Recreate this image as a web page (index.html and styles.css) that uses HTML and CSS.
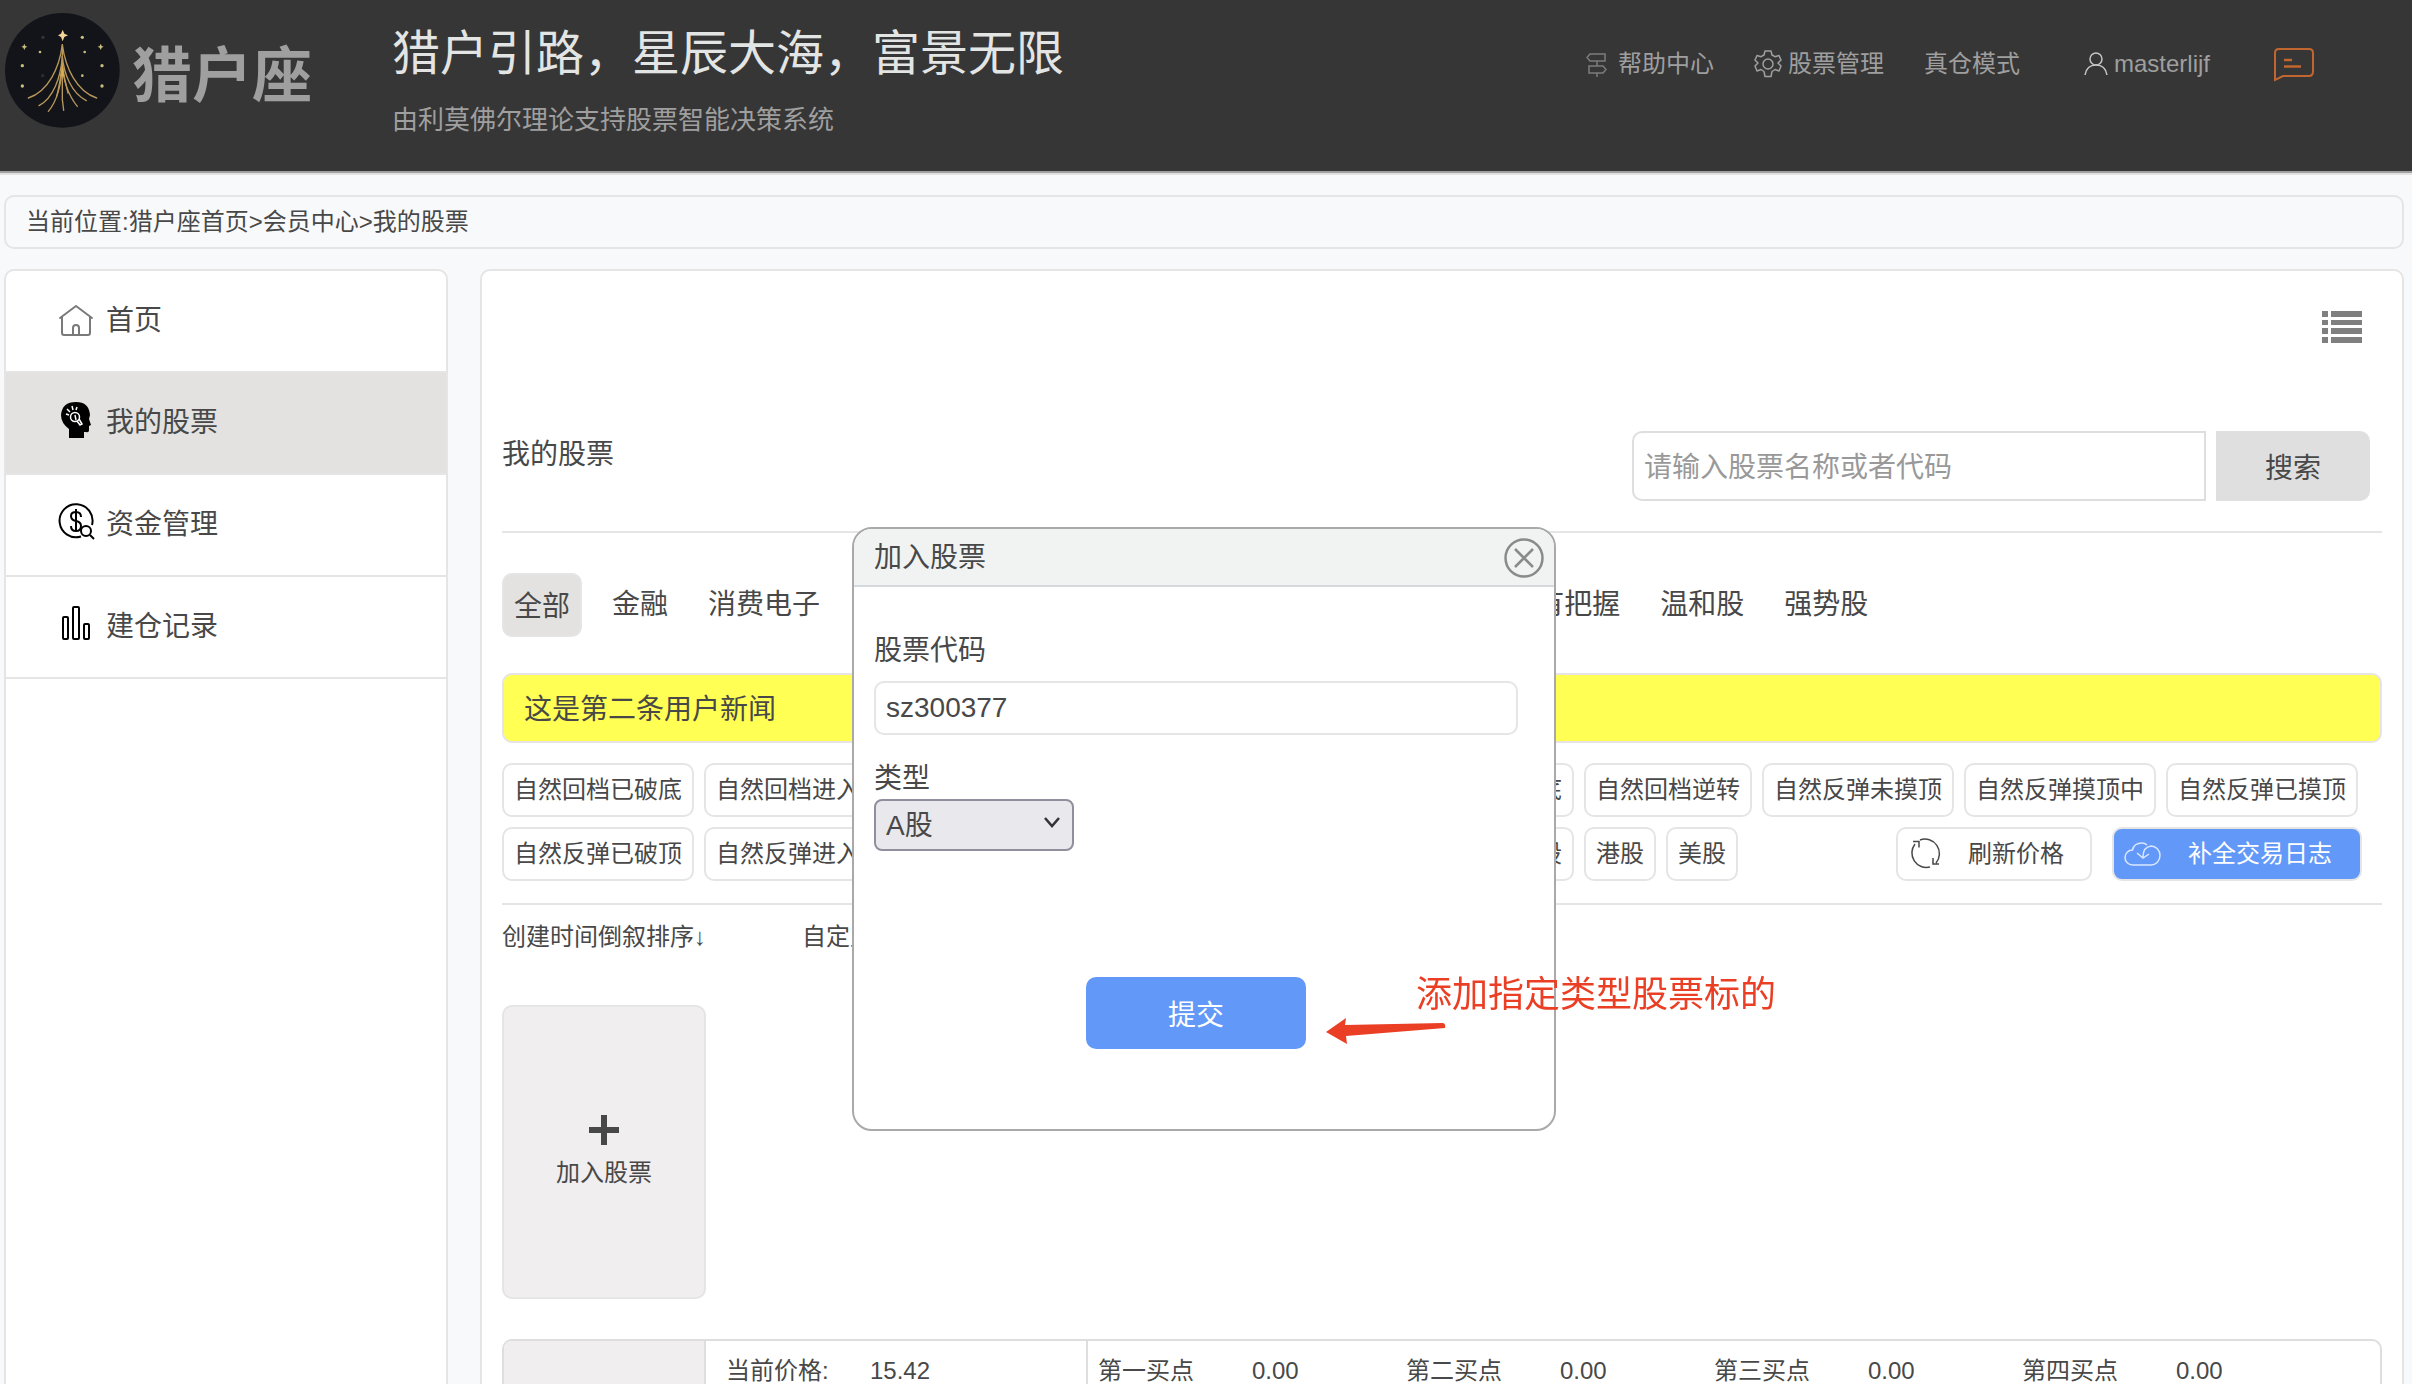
FILE: index.html
```
<!DOCTYPE html>
<html lang="zh-CN">
<head>
  <meta charset="utf-8">
  <title>猎户座 - 我的股票</title>
  <link rel="stylesheet" href="styles.css">
</head>
<body>
  <header class="header">
    <a class="brand" href="#">
      <svg class="brand-logo" viewBox="15 40 345 345">
        <circle cx="187" cy="212" r="172" fill="#131419"/>
        <g fill="none" stroke="#b8975a" stroke-width="4" stroke-linecap="round">
          <path d="M187 135C178 205 145 275 85 295"/>
          <path d="M187 135C196 205 230 275 290 295"/>
          <path d="M187 170C182 235 160 295 117 318"/>
          <path d="M187 195C184 260 170 305 145 335"/>
          <path d="M187 195C190 245 208 290 232 320"/>
          <path d="M187 170C192 225 215 280 259 303"/>
          <path d="M187 195C182 235 178 260 170 290"/>
          <path d="M187 195C192 235 196 250 204 280"/>
          <path d="M187 140V300L191 332"/>
        </g>
        <path d="M187 190l6 40h-12z" fill="#dba94f"/>
        <path d="M188 90l5 12 11 5-11 5-5 13-5-13-9-5 9-5z" fill="#f3d596"/>
        <g fill="#c9bd7c">
          <path d="M73 132l3 7 6 2-6 3-3 7-3-7-6-3 6-2z"/>
          <path d="M302 132l3 7 6 2-6 3-3 7-3-7-6-3 6-2z"/>
          <circle cx="247" cy="113" r="5"/>
          <circle cx="120" cy="157" r="4"/>
          <circle cx="254" cy="157" r="4"/>
          <circle cx="67" cy="198" r="5"/>
          <circle cx="306" cy="198" r="5"/>
          <circle cx="247" cy="228" r="4"/>
          <circle cx="67" cy="259" r="5"/>
          <circle cx="306" cy="259" r="5"/>
        </g>
        <circle cx="129" cy="113" r="5" fill="#34353a"/>
        <circle cx="128" cy="228" r="5" fill="#2d2e33"/>
      </svg>
      <span class="brand-name">猎户座</span>
    </a>
    <div class="slogan">
      <h1>猎户引路，星辰大海，富景无限</h1>
      <p>由利莫佛尔理论支持股票智能决策系统</p>
    </div>
    <nav class="top-nav">
      <a href="#">
        <svg width="26" height="24" viewBox="0 0 26 24" fill="none" stroke="#7c7c7c" stroke-width="1.500">
          <path d="M4 2h15v7H4L1 5.500z M3 14h14l3 3.500-3 3.500H3z M11 9v5 M11 21v4"/>
        </svg>
        帮助中心
      </a>
      <a href="#">
        <svg width="28" height="28" viewBox="0 0 28 28" fill="none" stroke="#9f9f9f" stroke-width="1.500" stroke-linejoin="round">
          <path d="M11 1h6l1 4 3 1.700 4-1.200 2 4.500-3 3 3 3-2 5-4-1.500-3 2-1 5h-6l-1-5-3-2-4 1.500-2-5 3-3-3-3 2-4.500 4 1.200L10 5z"/>
          <circle cx="14" cy="14" r="5"/>
        </svg>
        股票管理
      </a>
      <a class="nav-mode" href="#">真仓模式</a>
      <a class="nav-user" href="#">
        <svg width="24" height="24" viewBox="0 0 24 24" fill="none" stroke="#c4c4c4" stroke-width="1.500">
          <circle cx="12" cy="7" r="6"/>
          <path d="M1 23c1-6 5-10 11-10s10 4 11 10"/>
        </svg>
        masterlijf
      </a>
      <a class="nav-msg" href="#" aria-label="消息">
        <svg width="40" height="34" viewBox="0 0 40 34" fill="none" stroke="#c0662e" stroke-width="2">
          <path d="M1 33V6q0-4 4-4h30q4 0 4 4v18q0 5-4 5H9z"/>
          <path d="M10 13h8M10 19.500h17" stroke-width="2.500"/>
        </svg>
      </a>
    </nav>
  </header>

  <div class="crumb">当前位置:<a href="#">猎户座首页</a>&gt;<a href="#">会员中心</a>&gt;<a href="#">我的股票</a></div>

  <div class="layout">
    <aside class="sidebar">
      <a href="#">
        <svg viewBox="0 0 40 40" fill="none" stroke="#7a7a7a" stroke-width="2" stroke-linecap="round" stroke-linejoin="round">
          <path d="M4 17L20 5l16 12M6 16v16q0 2 2 2h24q2 0 2-2V16M17 34v-7q0-3 3-3t3 3v7"/>
        </svg>
        首页
      </a>
      <a class="on" href="#">
        <svg viewBox="0 0 40 40">
          <path d="M13 35V26Q5 20 5 12Q6-1 20-1q13 0 14 13l-1 4 2 6-2 1v4q0 3-3 2h-2v6z" fill="#000"/>
          <g fill="none" stroke="#fff" stroke-width="1.500">
            <circle cx="19" cy="14" r="4.500"/>
            <path d="M21 18l3 4 2-1-3-5M19 12l1 5M10 11l3 1M11 6l3 3M16 3l1 4M21 4l-1 3"/>
          </g>
        </svg>
        我的股票
      </a>
      <a href="#">
        <svg viewBox="0 0 40 40" fill="none" stroke="#000" stroke-width="2">
          <path d="M36 20A16.500 16.500 0 1 0 25 31.500"/>
          <path d="M25 12q0-5-5-5t-5 4q0 4 5 5t5 5q0 5-5 5t-5-5M20 4v23"/>
          <circle cx="30" cy="26" r="5"/>
          <path d="M34 30l4 4"/>
        </svg>
        资金管理
      </a>
      <a href="#">
        <svg viewBox="0 0 40 40" fill="none" stroke="#000" stroke-width="2">
          <rect x="7" y="10" width="5" height="22" rx="1"/>
          <rect x="17" y="0" width="6" height="32" rx="1"/>
          <rect x="28" y="17" width="5" height="15" rx="1"/>
        </svg>
        建仓记录
      </a>
    </aside>

    <main class="main">
      <div class="tools">
        <button class="icon-btn" type="button" aria-label="列表">
          <svg width="40" height="32" viewBox="0 0 40 32" fill="#7f7f7f">
            <path d="M0 0h6v6H0zM9 0h31v6H9zM0 9h6v5H0zM9 9h31v5H9zM0 17h6v6H0zM9 17h31v6H9zM0 26h6v6H0zM9 26h31v6H9z"/>
          </svg>
        </button>
      </div>

      <div class="title-row">
        <h2>我的股票</h2>
        <form class="search">
          <input type="text" placeholder="请输入股票名称或者代码" aria-label="请输入股票名称或者代码">
          <button type="button">搜索</button>
        </form>
      </div>

      <nav class="tabs">
        <a class="on" href="#">全部</a>
        <a href="#">金融</a>
        <a href="#">消费电子</a>
        <a href="#">人工智能</a>
        <a href="#">新能源车</a>
        <a href="#">医药</a>
        <a href="#">半导体</a>
        <a href="#">房地产</a>
        <a href="#">很有把握</a>
        <a href="#">温和股</a>
        <a href="#">强势股</a>
      </nav>

      <div class="news">这是第二条用户新闻</div>

      <div class="filters">
        <button type="button">自然回档已破底</button>
        <button type="button">自然回档进入上升趋势</button>
        <button type="button">自然回档未摸底</button>
        <button type="button">自然回档摸底中</button>
        <button type="button">自然回档已摸底</button>
        <button type="button">自然回档逆转</button>
        <button type="button">自然反弹未摸顶</button>
        <button type="button">自然反弹摸顶中</button>
        <button type="button">自然反弹已摸顶</button>
        <button type="button">自然反弹已破顶</button>
        <button type="button">自然反弹进入下降趋势</button>
        <button type="button">上升趋势进行中</button>
        <button type="button">下降趋势进行中</button>
        <button type="button">全部自选持仓股</button>
        <button type="button">港股</button>
        <button type="button">美股</button>
        <div class="actions">
          <button class="refresh" type="button">
            <svg width="32" height="32" viewBox="0 0 32 32" fill="none" stroke="#484848" stroke-width="1.500">
              <path d="M7 6A14.500 14.500 0 0 0 22 29M12 2A14.500 14.500 0 0 1 28 25M5 3.500h6v6M25 20v6h6"/>
            </svg>
            刷新价格
          </button>
          <button class="primary" type="button">
            <svg width="36" height="36" viewBox="0 0 36 36" fill="none" stroke="#d9e6ff" stroke-width="1.500">
              <path d="M27 29H8.500A7.500 7.500 0 0 1 8.500 14Q10 7 18 7q3 0 5 2"/>
              <path d="M27 29A9 9.500 0 0 0 27 10Q19 11 19 21M13 17l6 5 6-4"/>
            </svg>
            补全交易日志
          </button>
        </div>
      </div>

      <div class="sort">
        <a href="#">创建时间倒叙排序↓</a>
        <a href="#">自定义排序</a>
      </div>

      <button class="add-card" type="button">
        <svg width="30" height="30" viewBox="0 0 30 30" stroke="#484848" stroke-width="6">
          <path d="M15 0v30M0 15h30"/>
        </svg>
        加入股票
      </button>

      <div class="stock">
        <table>
          <colgroup>
            <col class="c-name"><col class="c-label"><col class="c-price">
            <col class="c-label"><col class="c-point">
            <col class="c-label"><col class="c-point">
            <col class="c-label"><col class="c-point">
            <col class="c-label"><col>
          </colgroup>
          <tr>
            <td class="name"></td>
            <th class="now">当前价格:</th><td class="price">15.42</td>
            <th>第一买点</th><td>0.00</td>
            <th>第二买点</th><td>0.00</td>
            <th>第三买点</th><td>0.00</td>
            <th>第四买点</th><td>0.00</td>
          </tr>
        </table>
      </div>
    </main>
  </div>

  <div class="dialog-layer">
    <div class="dialog" role="dialog" aria-labelledby="dialog-title">
      <div class="dialog-head">
        <h3 id="dialog-title">加入股票</h3>
        <button class="icon-btn" type="button" aria-label="关闭">
          <svg width="40" height="40" viewBox="0 0 40 40" fill="none" stroke="#8a8a8a" stroke-width="2.500">
            <circle cx="20" cy="20" r="18.500"/>
            <path d="M11 11l18 18M29 11L11 29"/>
          </svg>
        </button>
      </div>
      <form class="dialog-body">
        <label for="code">股票代码</label>
        <input id="code" type="text" value="sz300377">
        <label for="type">类型</label>
        <div class="select">
          <select id="type">
            <option>A股</option>
            <option>港股</option>
            <option>美股</option>
          </select>
          <svg width="16" height="12" viewBox="0 0 16 12" fill="none" stroke="#333" stroke-width="2.500"><path d="M1 1l7 8 7-8"/></svg>
        </div>
        <button class="submit" type="button">提交</button>
      </form>
      <div class="tip">
        <svg width="120" height="28" viewBox="0 0 120 28" fill="#ea3f24">
          <path d="M0 14L20 0l-1 7L117 5q3 1 2 5L20 18l1 8z"/>
        </svg>
        <span>添加指定类型股票标的</span>
      </div>
    </div>
  </div>
</body>
</html>
```
FILE: styles.css
```
* {
  box-sizing: border-box;
}
/* page does not scroll while the dialog is open */
body {
  margin: 0;
  height: 100vh;
  overflow: hidden;
  background: #f8f9fb;
  color: #484848;
  font-size: 24px;
  font-family: "Liberation Sans", "Noto Sans CJK SC", sans-serif;
}
a {
  color: inherit;
  text-decoration: none;
}
h1, h2, h3, p {
  margin: 0;
  font-weight: normal;
}
button, input, select {
  margin: 0;
  color: inherit;
  font-family: inherit;
  font-size: 28px;
}
svg {
  display: block;
  flex: none;
  overflow: visible;
}
.icon-btn {
  padding: 0;
  border: 0;
  background: none;
}

/* header */
.header {
  display: flex;
  align-items: flex-start;
  height: 173px;
  padding: 13px 98px 0 5px;
  background: #363636;
  border-bottom: 2px solid #a0a0a0;
  box-shadow: 0 2px 0 #e2e2e2;
  color: #9f9f9f;
}
.brand {
  display: flex;
  align-items: center;
  gap: 12px;
  width: 387px;
}
.brand-logo {
  width: 115px;
  height: 115px;
}
.brand-name {
  font-size: 60px;
  font-weight: bold;
}
.slogan h1 {
  color: #e3e5e5;
  font-size: 48px;
  line-height: 82px;
}
.slogan p {
  font-size: 26px;
  line-height: 50px;
}
.top-nav {
  display: flex;
  align-items: center;
  gap: 40px;
  height: 102px;
  margin-left: auto;
  line-height: 36px;
}
.top-nav a {
  display: flex;
  align-items: center;
  gap: 6px;
}
.nav-mode {
  margin-right: 24px;
}
.nav-msg {
  margin-left: 24px;
}

.crumb {
  margin: 22px 8px 20px 4px;
  padding: 0 20px;
  border: 2px solid #e5e5e5;
  border-radius: 10px;
  line-height: 50px;
}
.layout {
  display: flex;
  gap: 32px;
  margin: 0 8px 0 4px;
}

/* sidebar */
.sidebar {
  flex: none;
  width: 444px;
  border: 2px solid #e5e5e5;
  border-radius: 10px;
  background: #fff;
}
.sidebar a {
  display: flex;
  align-items: center;
  gap: 10px;
  height: 102px;
  padding-left: 50px;
  border-bottom: 2px solid #e5e5e5;
  font-size: 28px;
  line-height: 40px;
}
.sidebar a.on {
  background: #e3e2e0;
}
.sidebar svg {
  width: 40px;
  height: 40px;
}

/* main panel */
.main {
  flex: 1;
  min-width: 0;
  padding: 20px;
  border: 2px solid #e5e5e5;
  border-radius: 10px;
  background: #fff;
}
.tools {
  display: flex;
  justify-content: flex-end;
  padding: 20px 20px 88px;
}
.title-row {
  display: flex;
  justify-content: space-between;
  padding: 0 12px 30px 0;
  border-bottom: 2px solid #e5e5e5;
}
.title-row h2 {
  font-size: 28px;
  line-height: 48px;
}
.search {
  display: flex;
  gap: 10px;
}
.search input {
  width: 574px;
  height: 70px;
  padding: 4px 10px 0;
  border: 2px solid #dedede;
  border-radius: 10px 0 0 10px;
}
.search input::placeholder {
  color: #999;
}
.search button {
  width: 154px;
  border: 0;
  border-radius: 0 10px 10px 0;
  background: #dfdfdf;
}

.tabs {
  display: flex;
  align-items: flex-start;
  gap: 20px;
  margin: 40px 0 36px;
  font-size: 28px;
  line-height: 56px;
  white-space: nowrap;
}
.tabs a {
  padding: 4px 10px 0;
}
.tabs a.on {
  border: 2px solid #e5e5e5;
  border-radius: 10px;
  background: #e3e2e0;
}
.news {
  padding: 4px 20px 0;
  border: 2px solid #e5e5e5;
  border-radius: 10px;
  background: #ffff54;
  font-size: 28px;
  line-height: 62px;
}
.filters {
  display: flex;
  flex-wrap: wrap;
  gap: 10px;
  padding: 20px 0 22px;
  border-bottom: 2px solid #e5e5e5;
}
.filters button {
  height: 54px;
  padding: 0 10px;
  border: 2px solid #e5e5e5;
  border-radius: 10px;
  background: #fff;
  font-size: 24px;
  line-height: 36px;
}
.actions {
  display: flex;
  gap: 20px;
  margin: 0 20px 0 auto;
}
.actions button {
  display: flex;
  align-items: center;
  gap: 28px;
  padding-right: 26px;
}
.actions .primary {
  padding-right: 28px;
  background: #6298f8;
  color: #fff;
}

.sort {
  display: flex;
  margin: 14px 0 50px;
  line-height: 36px;
}
.sort a {
  width: 300px;
}
.add-card {
  display: flex;
  flex-direction: column;
  align-items: center;
  justify-content: center;
  gap: 12px;
  width: 204px;
  height: 294px;
  border: 2px solid #e5e5e5;
  border-radius: 10px;
  background: #f0eeef;
  font-size: 24px;
  line-height: 32px;
}

.stock {
  margin-top: 40px;
  border: 2px solid #dedede;
  border-radius: 10px;
  overflow: hidden;
}
.stock table {
  width: 100%;
  table-layout: fixed;
  border-collapse: separate;
  border-spacing: 0;
  line-height: 36px;
}
.stock th, .stock td {
  height: 60px;
  padding: 0;
  font-weight: normal;
  text-align: left;
}
.stock th {
  padding-left: 10px;
}
.stock .now {
  padding-left: 20px;
}
.stock .name {
  background: #f0eeef;
}
.stock .name, .stock .price {
  border-right: 2px solid #dedede;
}
.c-name {
  width: 202px;
}
.c-label {
  width: 164px;
}
.c-price {
  width: 218px;
}
.c-point {
  width: 144px;
}

/* dialog */
.dialog-layer {
  position: fixed;
  top: 527px;
  left: 4px;
  right: 8px;
  display: flex;
  justify-content: center;
}
.dialog {
  position: relative;
  width: 704px;
  border: 2px solid #a9a9a9;
  border-radius: 20px;
  background: #fff;
}
.dialog-head {
  display: flex;
  align-items: center;
  justify-content: space-between;
  height: 58px;
  padding: 2px 10px 0 20px;
  border-bottom: 2px solid #d5dade;
  border-radius: 18px 18px 0 0;
  background: #f1f3f3;
}
.dialog-head h3 {
  font-size: 28px;
  line-height: 40px;
}
.dialog-body {
  display: flex;
  flex-direction: column;
  padding: 44px 36px 80px 20px;
}
.dialog-body label {
  font-size: 28px;
  line-height: 40px;
}
.dialog-body input {
  height: 54px;
  margin: 10px 0 24px;
  padding: 0 10px;
  border: 2px solid #e5e5e5;
  border-radius: 10px;
}
.select {
  position: relative;
  width: 200px;
}
.select select {
  appearance: none;
  width: 100%;
  height: 52px;
  padding: 0 10px;
  border: 2px solid #8f8f9d;
  border-radius: 8px;
  background: #e9e9ed;
}
.select svg {
  position: absolute;
  top: 18px;
  right: 14px;
  pointer-events: none;
}
.submit {
  align-self: center;
  width: 220px;
  height: 72px;
  margin-top: 126px;
  border: 0;
  border-radius: 10px;
  background: #6298f8;
  color: #fff;
}
.tip {
  position: absolute;
  top: 440px;
  left: 472px;
  color: #ea3f24;
  font-size: 36px;
  line-height: 52px;
  white-space: nowrap;
}
.tip svg {
  position: absolute;
  top: 49px;
  left: 0;
}
.tip span {
  margin-left: 90px;
}
```
